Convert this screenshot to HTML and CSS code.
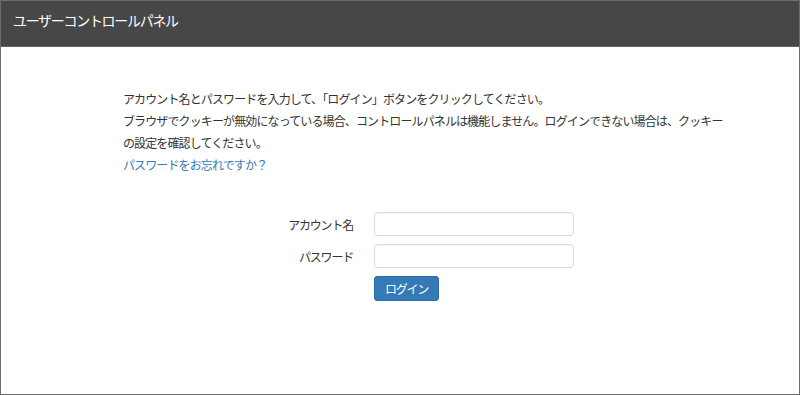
FILE: index.html
```html
<!DOCTYPE html>
<html lang="ja">
<head>
    <meta charset="UTF-8">
    <title>ユーザーコントロールパネル</title>
    <link rel="stylesheet" href="styles.css">
</head>
<body>
    <div class="frame">
        <!-- ヘッダー -->
        <header class="navbar">
            <span class="brand">ユーザーコントロールパネル</span>
        </header>

        <div class="content">
            <!-- 説明文 -->
            <div class="intro">
                <p>アカウント名とパスワードを入力して、「ログイン」ボタンをクリックしてください。</p>
                <p>ブラウザでクッキーが無効になっている場合、コントロールパネルは機能しません。ログインできない場合は、クッキーの設定を確認してください。</p>
                <p><a href="#" class="link">パスワードをお忘れですか？</a></p>
            </div>

            <!-- ログインフォーム -->
            <form class="login-form" onsubmit="return false;">
                <div class="form-row">
                    <label class="form-label" for="account">アカウント名</label>
                    <input class="form-control" type="text" id="account">
                </div>
                <div class="form-row">
                    <label class="form-label" for="password">パスワード</label>
                    <input class="form-control" type="password" id="password">
                </div>
                <div class="form-row">
                    <span class="form-label"></span>
                    <button class="btn-primary" type="submit">ログイン</button>
                </div>
            </form>
        </div>
    </div>
</body>
</html>
```

FILE: styles.css
```css
* {
    margin: 0;
    padding: 0;
    box-sizing: border-box;
}

html, body {
    height: 100%;
}

body {
    font-family: "Noto Sans CJK JP", "Noto Sans", sans-serif;
    font-size: 12px;
    color: #333;
    background: #fff;
}

.frame {
    height: 100%;
    border: 1px solid #6c6c68;
    display: flex;
    flex-direction: column;
}

/* ヘッダー */
.navbar {
    height: 46px;
    background-color: #474747;
    border-bottom: 1px solid #5e5e5c;
    display: flex;
    align-items: center;
    padding: 0 0 8px 12px;
}

.brand {
    color: #fff;
    font-size: 14px;
    letter-spacing: -1.3px;
}

.content {
    flex: 1;
    padding-top: 41px;
}

.intro {
    width: 604px;
    margin-left: 122px;
    line-height: 22px;
    letter-spacing: -0.88px;
}

.link {
    color: #337ab7;
    text-decoration: none;
}

/* フォーム */
.login-form {
    margin-top: 36px;
    display: flex;
    flex-direction: column;
    gap: 8px;
}

.form-row {
    display: flex;
    align-items: center;
}

.form-label {
    width: 352px;
    text-align: right;
    letter-spacing: -1.2px;
}

.form-control {
    margin-left: 21px;
    width: 200px;
    height: 24px;
    border: 1px solid #dcdcdc;
    border-radius: 4px;
    box-shadow: inset 0 1px 1px rgba(0, 0, 0, 0.04);
    padding: 0 6px;
    font-size: 12px;
}

.btn-primary {
    margin-left: 21px;
    width: 65px;
    height: 25px;
    background-color: #337ab7;
    border: 1px solid #2e6da4;
    border-radius: 3px;
    color: #fff;
    font-family: inherit;
    font-size: 12px;
    letter-spacing: -1.2px;
    cursor: pointer;
}
```
